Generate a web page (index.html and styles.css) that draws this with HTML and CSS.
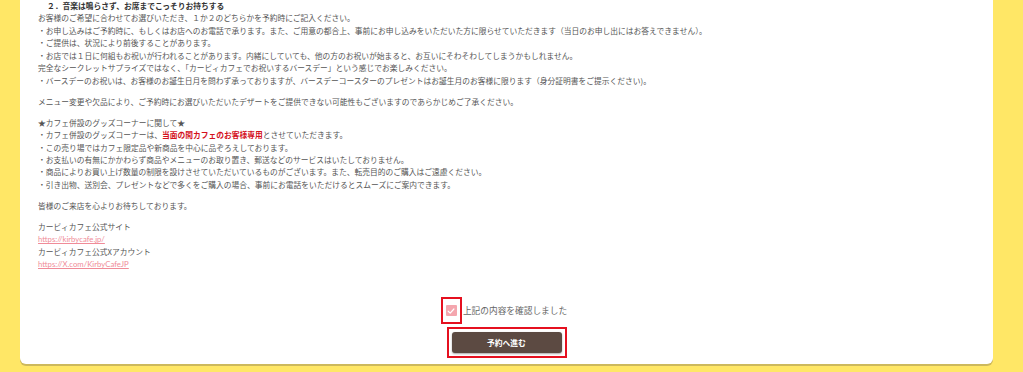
FILE: index.html
```html
<!DOCTYPE html>
<html lang="ja">
<head>
<meta charset="utf-8">
<link rel="stylesheet" href="styles.css">
</head>
<body>
<div class="card">
  <div class="notes">
    <p>
      <strong class="heading">２．音楽は鳴らさず、お席までこっそりお持ちする</strong><br>
      お客様のご希望に合わせてお選びいただき、１か２のどちらかを予約時にご記入ください。<br>
      ・お申し込みはご予約時に、もしくはお店へのお電話で承ります。また、ご用意の都合上、事前にお申し込みをいただいた方に限らせていただきます（当日のお申し出にはお答えできません）。<br>
      ・ご提供は、状況により前後することがあります。<br>
      ・お店では１日に何組もお祝いが行われることがあります。内緒にしていても、他の方のお祝いが始まると、お互いにそわそわしてしまうかもしれません。<br>
      完全なシークレットサプライズではなく、「カービィカフェでお祝いするバースデー」という感じでお楽しみください。<br>
      ・バースデーのお祝いは、お客様のお誕生日月を問わず承っておりますが、バースデーコースターのプレゼントはお誕生月のお客様に限ります（身分証明書をご提示ください)。
    </p>
    <p>メニュー変更や欠品により、ご予約時にお選びいただいたデザートをご提供できない可能性もございますのであらかじめご了承ください。</p>
    <p>
      ★カフェ併設のグッズコーナーに関して★<br>
      ・カフェ併設のグッズコーナーは、<span class="em">当面の間カフェのお客様専用</span>とさせていただきます。<br>
      ・この売り場ではカフェ限定品や新商品を中心に品ぞろえしております。<br>
      ・お支払いの有無にかかわらず商品やメニューのお取り置き、郵送などのサービスはいたしておりません。<br>
      ・商品によりお買い上げ数量の制限を設けさせていただいているものがございます。また、転売目的のご購入はご遠慮ください。<br>
      ・引き出物、送別会、プレゼントなどで多くをご購入の場合、事前にお電話をいただけるとスムーズにご案内できます。
    </p>
    <p>皆様のご来店を心よりお待ちしております。</p>
    <p>
      カービィカフェ公式サイト<br>
      <a class="link" href="#">https://kirbycafe.jp/</a><br>
      カービィカフェ公式Xアカウント<br>
      <a class="link" href="#">https://X.com/KirbyCafeJP</a>
    </p>
  </div>
  <div class="confirm">
    <label class="check-row">
      <span class="check-wrap">
        <span class="checkbox">
          <svg viewBox="0 0 10 10" width="10" height="10"><path d="M2.2 5.2 L4.2 7.1 L7.9 3" fill="none" stroke="#fff" stroke-width="1.2" stroke-linecap="round" stroke-linejoin="round"/></svg>
        </span>
      </span>
      <span class="check-label">上記の内容を確認しました</span>
    </label>
    <span class="btn-wrap">
      <button class="next-btn" type="button">予約へ進む</button>
    </span>
  </div>
</div>
</body>
</html>
```
FILE: styles.css
```css
html, body {
  margin: 0;
  padding: 0;
}
body {
  background: #ffe766;
  font-family: "Noto Sans CJK JP", "Noto Sans", sans-serif;
  color: #555;
  height: 372px;
  overflow: hidden;
}
.card {
  margin: 0 30px 0 20px;
  background: #fff;
  border-radius: 0 0 6px 6px;
  box-shadow: 0 2px 0 #cdb95c;
  padding: 0 18px 11px 18px;
}
.notes p {
  margin: 0 0 8.5px 0;
  font-size: 7.75px;
  line-height: 12.45px;
}
.heading {
  display: inline-block;
  padding-left: 9px;
  font-weight: bold;
  color: #333;
}
.em {
  color: #d4101c;
  font-weight: bold;
}
.link {
  color: #f08b98;
  text-decoration: underline;
  font-family: "Lato", "Noto Sans", sans-serif;
}
.confirm {
  display: flex;
  flex-direction: column;
  align-items: center;
  padding-top: 23px;
}
.check-row {
  display: flex;
  align-items: center;
  gap: 6px;
}
.check-wrap {
  display: flex;
  align-items: center;
  justify-content: center;
  width: 11px;
  height: 17px;
  outline: 2px solid #e5101f;
  outline-offset: 3px;
}
.checkbox {
  width: 11px;
  height: 11px;
  background: #f4a6ae;
  border-radius: 1px;
  display: flex;
  align-items: center;
  justify-content: center;
}
.check-label {
  font-size: 8.7px;
  color: #666;
  line-height: 17px;
}
.btn-wrap {
  display: block;
  margin-top: 13px;
  outline: 2px solid #e5101f;
  outline-offset: 3px;
}
.next-btn {
  display: block;
  width: 110px;
  height: 21px;
  border: none;
  border-radius: 3px;
  background: #5c4a42;
  color: #fff;
  font-family: "Noto Sans CJK JP", sans-serif;
  font-weight: bold;
  font-size: 7.75px;
  box-shadow: 0 1px 2px rgba(0,0,0,0.35);
  padding: 0;
}
```
